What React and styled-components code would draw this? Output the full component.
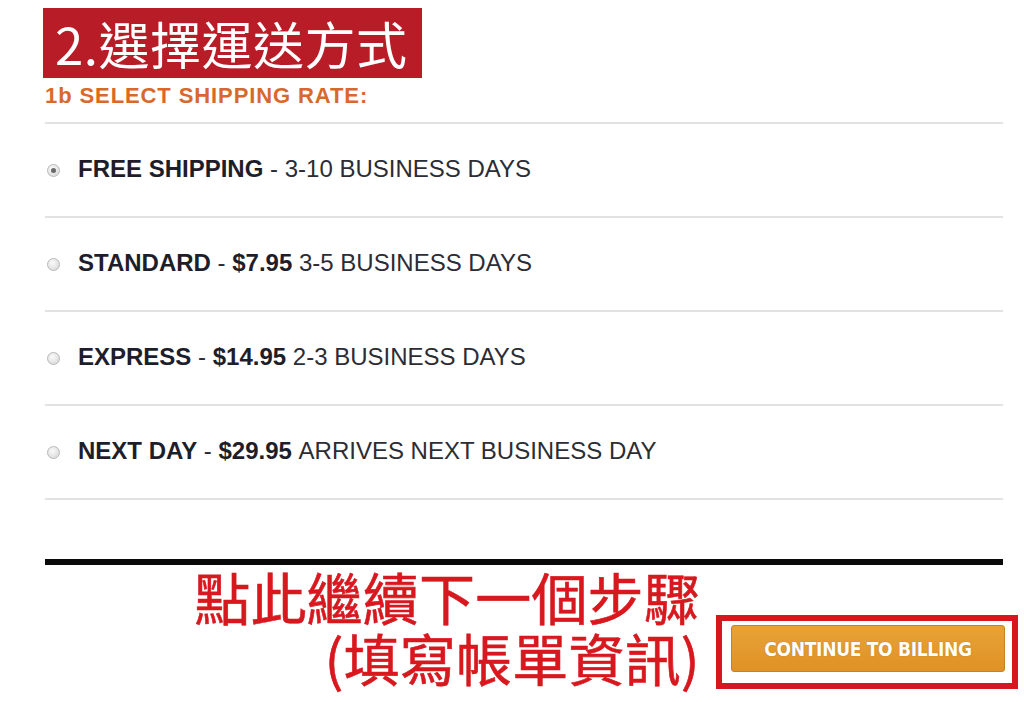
import React from 'react'
import styled, { createGlobalStyle } from 'styled-components'

const GlobalStyle = createGlobalStyle`
    body {
        margin: 0;
        background: #fff;
        font-family: "Liberation Sans", Arial, sans-serif;
    }
`

const Page = styled.div`
    width: 1024px;
    height: 702px;
    padding: 8px 0 0 43px;
    box-sizing: border-box;
    overflow: hidden;
`
const TitleBox = styled.div`
    display: inline-block;
    height: 70px;
    line-height: 70px;
    padding: 0 15px 0 12px;
    background: #b81c26;
    color: #fff;
    font-family: "Noto Sans CJK TC", "Noto Sans", sans-serif;
    font-size: 51px;
    font-weight: 400;
    letter-spacing: 0.5px;
`
const Section = styled.div`
    width: 958px;
    margin-left: 2px;
`
const RateLabel = styled.div`
    margin-top: 6px;
    padding-bottom: 14px;
    border-bottom: 2px solid #e2e2e2;
    height: 24px;
    line-height: 24px;
    font-size: 22px;
    font-weight: 700;
    letter-spacing: 0.9px;
    color: #d8692b;
`
const Row = styled.label`
    display: flex;
    align-items: center;
    gap: 18px;
    height: 92px;
    padding-left: 2px;
    border-bottom: 2px solid #e2e2e2;
    font-size: 24px;
    color: #2c2c34;
`
const Radio = styled.span`
    position: relative;
    width: 11px;
    height: 11px;
    border-radius: 50%;
    border: 1px solid #b8b8b8;
    background: radial-gradient(circle at 40% 35%, #fafafa, #d4d4d4);
    flex: none;

    &::after {
        content: '';
        display: ${p => p.checked ? 'block' : 'none'};
        position: absolute;
        left: 3px;
        top: 3px;
        width: 5px;
        height: 5px;
        border-radius: 50%;
        background: #6a6a6a;
    }
`
const RowText = styled.span`
    margin-top: -3px;
    b {
        font-weight: 700;
        color: #1e1e2a;
    }
`
const Rule = styled.div`
    margin-top: 59px;
    height: 6px;
    background: #0a0a0a;
`
const Bottom = styled.div`
    display: flex;
    align-items: flex-start;
`
const Hint = styled.div`
    width: 657px;
    text-align: right;
    font-family: "Noto Sans CJK TC", "Noto Sans", sans-serif;
    font-size: 56px;
    font-weight: 400;
    line-height: 61px;
    letter-spacing: 0.2px;
    color: #d7191f;
    -webkit-text-stroke: 0.6px #d7191f;
`
const Frame = styled.div`
    margin-top: 50px;
    margin-left: 16px;
    width: 302px;
    height: 74px;
    border: 6px solid #d7171f;
    padding: 4px 7px 11px 9px;
    box-sizing: border-box;
`
const ContinueButton = styled.button`
    width: 274px;
    height: 47px;
    border: 1px solid #c68120;
    border-radius: 3px;
    background: linear-gradient(#e8a236, #df9226);
    color: #fff;
    font-family: "DejaVu Sans Condensed", "DejaVu Sans", sans-serif;
    font-stretch: condensed;
    font-size: 19px;
    font-weight: 700;
    letter-spacing: -0.3px;
    text-shadow: 0 0 1px rgba(120, 70, 0, 0.5);
    cursor: pointer;
`

const rates = [
    { name: 'FREE SHIPPING', price: '', info: '3-10 BUSINESS DAYS', checked: true },
    { name: 'STANDARD', price: '$7.95', info: '3-5 BUSINESS DAYS' },
    { name: 'EXPRESS', price: '$14.95', info: '2-3 BUSINESS DAYS' },
    { name: 'NEXT DAY', price: '$29.95', info: 'ARRIVES NEXT BUSINESS DAY' },
]

export default function App() {
    return <Page>
        <GlobalStyle />
        <TitleBox>2.選擇運送方式</TitleBox>
        <Section>
            <RateLabel>1b SELECT SHIPPING RATE:</RateLabel>
            {rates.map(r => (
                <Row key={r.name}>
                    <Radio checked={r.checked} />
                    <RowText>
                        <b>{r.name}</b> - {r.price && <b>{r.price} </b>}{r.info}
                    </RowText>
                </Row>
            ))}
            <Rule />
        </Section>
        <Bottom>
            <Hint>點此繼續下一個步驟<br />(填寫帳單資訊)</Hint>
            <Frame>
                <ContinueButton type="button">CONTINUE TO BILLING</ContinueButton>
            </Frame>
        </Bottom>
    </Page>
}
